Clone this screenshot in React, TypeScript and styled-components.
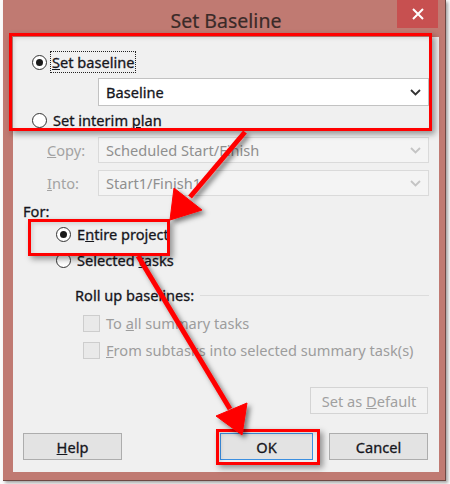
import React from 'react';
import styled, { createGlobalStyle } from 'styled-components';

const GlobalStyle = createGlobalStyle`
  html, body {
    margin: 0;
    padding: 0;
    background: #ffffff;
  }
  body {
    font-family: "Noto Sans", "Open Sans", sans-serif;
  }
`;

export default function App() {
  return (
    <>
      <GlobalStyle />
      <Page>
        <Window>
          <TitleBar>
            <span />
            <Title>Set Baseline</Title>
            <CloseButton>
              <svg width="12" height="12" viewBox="0 0 12 12">
                <path d="M1 1 L11 11 M11 1 L1 11" stroke="#fff" strokeWidth="2" />
              </svg>
            </CloseButton>
          </TitleBar>

          <Client>
            <OptionRow $indent={9} $top={15}>
              <Radio $checked />
              <FocusLabel><u>S</u>et baseline</FocusLabel>
            </OptionRow>
            <Combo $top={6} $height={28}>
              <ComboText>Baseline</ComboText>
              <Chevron />
            </Combo>
            <OptionRow $indent={9} $top={4}>
              <Radio />
              <Label>Set interim <u>p</u>lan</Label>
            </OptionRow>

            <FieldRow $top={7}>
              <FieldLabel><u>C</u>opy:</FieldLabel>
              <FieldCombo $disabled $height={26}>
                <ComboText $disabled>Scheduled Start/Finish</ComboText>
                <Chevron $disabled />
              </FieldCombo>
            </FieldRow>
            <FieldRow $top={7}>
              <FieldLabel><u>I</u>nto:</FieldLabel>
              <FieldCombo $disabled $height={26}>
                <ComboText $disabled>Start1/Finish1</ComboText>
                <Chevron $disabled />
              </FieldCombo>
            </FieldRow>

            <OptionRow $indent={0} $top={5}>
              <Label>For:</Label>
            </OptionRow>
            <OptionRow $indent={33} $top={3}>
              <Radio $checked />
              <Label>E<u>n</u>tire project</Label>
            </OptionRow>
            <OptionRow $indent={33} $top={6}>
              <Radio />
              <Label>Selected <u>t</u>asks</Label>
            </OptionRow>

            <GroupHeader>
              <Label>Roll up baselines:</Label>
              <GroupRule />
            </GroupHeader>
            <OptionRow $indent={60} $top={8}>
              <CheckBox />
              <Label $disabled>To <u>a</u>ll summary tasks</Label>
            </OptionRow>
            <OptionRow $indent={60} $top={7}>
              <CheckBox />
              <Label $disabled><u>F</u>rom subtasks into selected summary task(s)</Label>
            </OptionRow>

            <DefaultRow>
              <Button $width={118} $disabled><span>Set as <u>D</u>efault</span></Button>
            </DefaultRow>

            <ButtonRow>
              <Button $width={99}><span><u>H</u>elp</span></Button>
              <Spacer />
              <Button $width={93} $focused><span>OK</span></Button>
              <Button $width={99}><span>Cancel</span></Button>
            </ButtonRow>
          </Client>
        </Window>

        <Highlight style={{ left: 9, top: 33, width: 423, height: 98 }} />
        <Highlight style={{ left: 28, top: 219, width: 142, height: 37 }} />
        <Highlight style={{ left: 216, top: 429, width: 104, height: 36 }} />

        <ArrowLayer width="450" height="484" viewBox="0 0 450 484">
          <defs>
            <filter id="arrowShadow" x="-20%" y="-20%" width="140%" height="140%">
              <feDropShadow dx="3" dy="3" stdDeviation="2.5" floodColor="#000" floodOpacity="0.5" />
            </filter>
          </defs>
          <g filter="url(#arrowShadow)" fill="#ff0000" stroke="#ff0000">
            <line x1="245" y1="132" x2="190" y2="197" strokeWidth="5" />
            <polygon points="170,220 174,188 202,210" strokeWidth="1" />
            <line x1="138" y1="256" x2="230" y2="409" strokeWidth="5" />
            <polygon points="242,435 216,416 247,403" strokeWidth="1" />
          </g>
        </ArrowLayer>
      </Page>
    </>
  );
}

const Chevron = ({ $disabled }: { $disabled?: boolean }) => (
  <svg width="11" height="7" viewBox="0 0 11 7">
    <polyline
      points="1,1 5.5,5.5 10,1"
      fill="none"
      stroke={$disabled ? '#c4c4c4' : '#333'}
      strokeWidth="1.8"
    />
  </svg>
);

const Page = styled.div`
  position: relative;
  width: 450px;
  height: 484px;
  overflow: hidden;
  padding-left: 3px;
  box-sizing: border-box;
  background: #fbfbfb;
`;

const Window = styled.div`
  width: 443px;
  height: 481px;
  box-sizing: border-box;
  background: #c07a72;
  border-right: 1px solid #6e4844;
  border-bottom: 1px solid #6e4844;
  box-shadow: 2px 2px 3px rgba(0, 0, 0, 0.35);
  padding: 0 6px 8px 10px;
  display: flex;
  flex-direction: column;
`;

const TitleBar = styled.div`
  height: 37px;
  flex-shrink: 0;
  display: grid;
  grid-template-columns: 1fr auto 1fr;
  align-items: start;
`;

const Title = styled.div`
  font-size: 19.5px;
  color: #3a2a28;
  line-height: 20px;
  margin-top: 11px;
  -webkit-text-stroke: 0.2px #3a2a28;
`;

const CloseButton = styled.div`
  justify-self: end;
  margin-right: 1px;
  width: 41px;
  height: 28px;
  background: #c75050;
  display: flex;
  align-items: center;
  justify-content: center;
`;

const Client = styled.div`
  flex: 1;
  min-height: 0;
  background: #f0f0f0;
  padding: 0 10px;
  display: flex;
  flex-direction: column;
  font-size: 14.6px;
  color: #16161c;
`;

const OptionRow = styled.div<{ $indent: number; $top: number }>`
  height: 20px;
  flex-shrink: 0;
  margin-top: ${({ $top }) => $top}px;
  padding-left: ${({ $indent }) => $indent}px;
  display: flex;
  align-items: center;
  gap: 6px;
`;

const Label = styled.span<{ $disabled?: boolean }>`
  white-space: nowrap;
  line-height: 20px;
  color: ${({ $disabled }) => ($disabled ? '#9d9d9d' : '#16161c')};
  -webkit-text-stroke: ${({ $disabled }) => ($disabled ? '0' : '0.3px #16161c')};
`;

const FocusLabel = styled(Label)`
  outline: 1px dotted #222;
  outline-offset: 0;
  padding: 0 1px;
  margin-left: -2px;
`;

const Radio = styled.span<{ $checked?: boolean }>`
  position: relative;
  width: 15px;
  height: 15px;
  box-sizing: border-box;
  border-radius: 50%;
  border: 1px solid #333;
  background: #fff;
  flex-shrink: 0;

  &::after {
    content: '';
    display: ${({ $checked }) => ($checked ? 'block' : 'none')};
    position: absolute;
    left: 3px;
    top: 3px;
    width: 7px;
    height: 7px;
    border-radius: 50%;
    background: #1a1a1a;
  }
`;

const CheckBox = styled.span`
  width: 17px;
  height: 17px;
  box-sizing: border-box;
  border: 1px solid #cdcdcd;
  background: #e9e9e9;
  flex-shrink: 0;
`;

const Combo = styled.div<{ $disabled?: boolean; $top?: number; $height: number }>`
  height: ${({ $height }) => $height}px;
  flex-shrink: 0;
  margin-top: ${({ $top }) => $top ?? 0}px;
  margin-left: ${({ $disabled }) => ($disabled ? 0 : 75)}px;
  box-sizing: border-box;
  border: 1px solid ${({ $disabled }) => ($disabled ? '#dadada' : '#c2c2c2')};
  background: ${({ $disabled }) => ($disabled ? '#f4f4f4' : '#ffffff')};
  display: flex;
  align-items: center;
  justify-content: space-between;
  padding: 0 7px 0 7px;
`;

const FieldCombo = styled(Combo)`
  flex: 1;
`;

const ComboText = styled.span<{ $disabled?: boolean }>`
  color: ${({ $disabled }) => ($disabled ? '#8f8f8f' : '#16161c')};
  -webkit-text-stroke: ${({ $disabled }) => ($disabled ? '0' : '0.3px #16161c')};
  white-space: nowrap;
`;

const FieldRow = styled.div<{ $top: number }>`
  margin-top: ${({ $top }) => $top}px;
  flex-shrink: 0;
  display: flex;
  align-items: center;
`;

const FieldLabel = styled.span`
  width: 51px;
  flex-shrink: 0;
  padding-left: 24px;
  color: #a3a3a3;
  white-space: nowrap;
`;

const GroupHeader = styled.div`
  margin-top: 15px;
  height: 20px;
  flex-shrink: 0;
  padding-left: 52px;
  display: flex;
  align-items: center;
  gap: 6px;
`;

const GroupRule = styled.div`
  flex: 1;
  height: 1px;
  background: #dcdcdc;
`;

const DefaultRow = styled.div`
  margin-top: 27px;
  display: flex;
  justify-content: flex-end;
  padding-right: 1px;
`;

const ButtonRow = styled.div`
  margin-top: 19px;
  display: flex;
  gap: 16px;
  padding-right: 1px;
`;

const Spacer = styled.div`
  flex: 1;
`;

const Button = styled.div<{ $width: number; $disabled?: boolean; $focused?: boolean }>`
  width: ${({ $width }) => $width}px;
  height: 27px;
  flex-shrink: 0;
  box-sizing: border-box;
  display: flex;
  align-items: center;
  justify-content: center;
  background: ${({ $disabled }) => ($disabled ? '#f2f2f2' : '#e3e3e3')};
  border: 1px solid
    ${({ $disabled, $focused }) => ($focused ? '#3c8fe0' : $disabled ? '#d4d4d4' : '#adadad')};
  color: ${({ $disabled }) => ($disabled ? '#a0a0a0' : '#16161c')};
  -webkit-text-stroke: ${({ $disabled }) => ($disabled ? '0' : '0.3px #16161c')};
  white-space: nowrap;
`;

const Highlight = styled.div`
  position: absolute;
  box-sizing: border-box;
  border: 3px solid #ff0000;
  box-shadow: 3px 3px 6px rgba(0, 0, 0, 0.4), inset 2px 2px 4px rgba(0, 0, 0, 0.12);
  pointer-events: none;
`;

const ArrowLayer = styled.svg`
  position: absolute;
  left: 0;
  top: 0;
  pointer-events: none;
`;
